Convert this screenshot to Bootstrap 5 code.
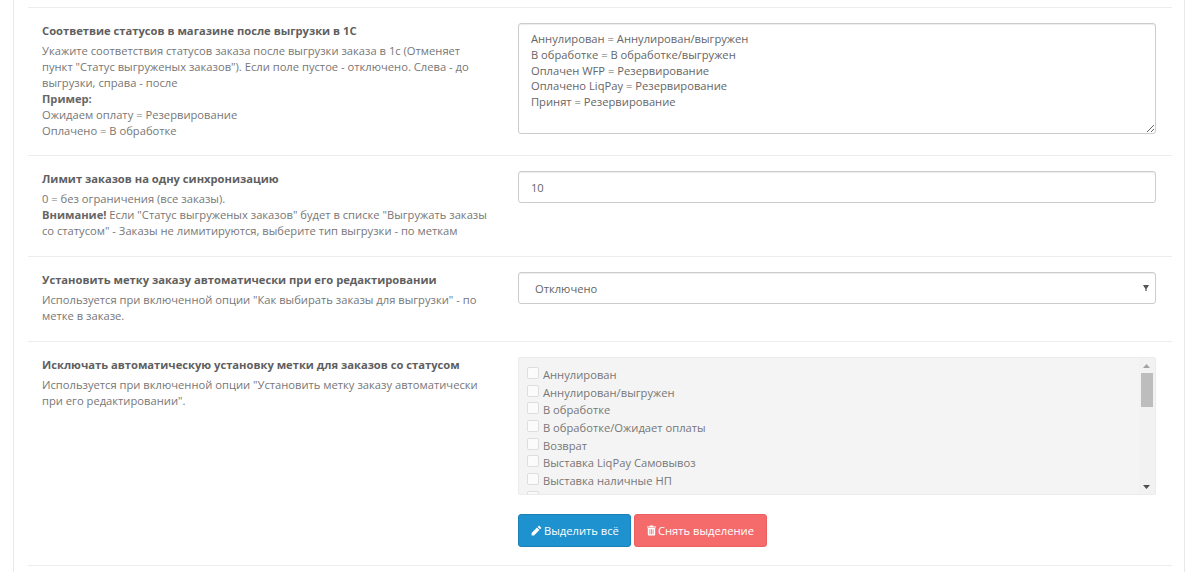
<!DOCTYPE html>
<html lang="ru">
<head>
<meta charset="utf-8">
<title>Настройки</title>
<link href="https://cdn.jsdelivr.net/npm/bootstrap@5.3.0/dist/css/bootstrap.min.css" rel="stylesheet">
<style>
html, body { height: 100%; overflow: hidden; }
body { background: #fff; font-family: "Open Sans", "Liberation Sans", sans-serif; font-size: 11.2px; color: #666; line-height: 16px; padding: 0 15px 0 13px; }
.sheet { min-height: 100%; border-left: 1px solid #e8e8e8; border-right: 1px solid #e8e8e8; padding: 7px 12px 0 14px; }
.fld { margin: 0; border-top: 1px solid #ededed; padding: 15px 0 17px; }
.fld-first { padding-bottom: 16px; }
.fld-last { padding-bottom: 18px; }
.fld-left { padding: 0 14px 0 14px; }
.fld-right { padding: 0 16px 0 13.3px; }
.fld-title { font-weight: 700; color: #5f5f5f; margin-bottom: 4px; }
.fld-help { color: #777; }
.fld-help b { color: #666; }
.ctl { font-size: 11.2px; line-height: 15.8px; color: #666; border: 1px solid #ccc; border-radius: 3px; box-shadow: inset 0 1px 1px rgba(0,0,0,.075); font-family: inherit; }
.ctl-area { height: 111px; padding: 7px 12px; }
.ctl-line { height: 32px; padding: 7px 12px; }
.ctl-sel { height: 32px; padding: 8px 12px 6px; text-indent: 4px; background-image: url("data:image/svg+xml,%3Csvg xmlns='http://www.w3.org/2000/svg' viewBox='0 0 6 6'%3E%3Cpath fill='%23555' d='M0 0h6L3.6 4v2H2.4V4z'/%3E%3C/svg%3E"); background-position: right 6px center; background-size: 6px 6px; }
.chk-box { height: 138px; margin-bottom: 19px; background: #f4f4f4; border: 1px solid #ebebeb; border-radius: 2px; display: flex; color: #777; }
.chk-list { flex: 1 1 auto; min-width: 0; overflow: hidden; padding: 7px 0 0 8px; }
.chk-item { display: flex; align-items: flex-start; height: 17.7px; margin: 0; }
.chk-mark { flex: none; width: 12px; height: 12px; margin: 2px 4px 0 0; background: #fbfbfb; border: 1px solid #dedede; border-radius: 2px; appearance: none; }
.chk-text { padding-top: 2px; }
.scr-bar { flex: none; width: 16px; background: #f2f2f2; display: flex; flex-direction: column; align-items: flex-start; }
.scr-btn { flex: none; width: 15px; height: 15px; display: flex; align-items: center; justify-content: center; }
.scr-thumb { flex: none; width: 12px; height: 34px; margin-left: 2px; background: #bdbdbd; }
.scr-fill { flex: 1 1 auto; }
.act-row { gap: 3px; }
.act-btn { height: 33px; padding: 0 12px; font-size: 11.2px; line-height: 31px; color: #fff; border-radius: 3px; display: inline-flex; align-items: center; gap: 2px; white-space: nowrap; }
.act-blue { background: #1e91cf; border-color: #1b80b8; width: 113px; }
.act-red { background: #f56b6b; border-color: #ee5f5f; width: 133px; }
.act-btn svg { flex: none; fill: #fff; }
</style>
</head>
<body>
<div class="sheet">
  <div class="row fld fld-first">
    <div class="col-5 fld-left">
      <div class="fld-title">Соответвие статусов в магазине после выгрузки в 1С</div>
      <div class="fld-help">Укажите соответствия статусов заказа после выгрузки заказа в 1с (Отменяет пункт "Статус выгруженых заказов"). Если поле пустое - отключено. Слева - до выгрузки, справа - после<br><b>Пример:</b><br>Ожидаем оплату = Резервирование<br>Оплачено = В обработке</div>
    </div>
    <div class="col-7 fld-right">
      <textarea class="form-control ctl ctl-area">Аннулирован = Аннулирован/выгружен
В обработке = В обработке/выгружен
Оплачен WFP = Резервирование
Оплачено LiqPay = Резервирование
Принят = Резервирование</textarea>
    </div>
  </div>
  <div class="row fld">
    <div class="col-5 fld-left">
      <div class="fld-title">Лимит заказов на одну синхронизацию</div>
      <div class="fld-help">0 = без ограничения (все заказы).<br><b>Внимание!</b> Если "Статус выгруженых заказов" будет в списке "Выгружать заказы со статусом" - Заказы не лимитируются, выберите тип выгрузки - по меткам</div>
    </div>
    <div class="col-7 fld-right">
      <input type="text" class="form-control ctl ctl-line" value="10">
    </div>
  </div>
  <div class="row fld">
    <div class="col-5 fld-left">
      <div class="fld-title">Установить метку заказу автоматически при его редактировании</div>
      <div class="fld-help">Используется при включенной опции "Как выбирать заказы для выгрузки" - по метке в заказе.</div>
    </div>
    <div class="col-7 fld-right">
      <select class="form-select ctl ctl-sel"><option>Отключено</option></select>
    </div>
  </div>
  <div class="row fld fld-last">
    <div class="col-5 fld-left">
      <div class="fld-title">Исключать автоматическую установку метки для заказов со статусом</div>
      <div class="fld-help">Используется при включенной опции "Установить метку заказу автоматически при его редактировании".</div>
    </div>
    <div class="col-7 fld-right">
      <div class="chk-box">
        <div class="chk-list">
          <label class="chk-item"><input type="checkbox" class="chk-mark"><span class="chk-text">Аннулирован</span></label>
          <label class="chk-item"><input type="checkbox" class="chk-mark"><span class="chk-text">Аннулирован/выгружен</span></label>
          <label class="chk-item"><input type="checkbox" class="chk-mark"><span class="chk-text">В обработке</span></label>
          <label class="chk-item"><input type="checkbox" class="chk-mark"><span class="chk-text">В обработке/Ожидает оплаты</span></label>
          <label class="chk-item"><input type="checkbox" class="chk-mark"><span class="chk-text">Возврат</span></label>
          <label class="chk-item"><input type="checkbox" class="chk-mark"><span class="chk-text">Выставка LiqPay Самовывоз</span></label>
          <label class="chk-item"><input type="checkbox" class="chk-mark"><span class="chk-text">Выставка наличные НП</span></label>
          <label class="chk-item"><input type="checkbox" class="chk-mark"></label>
        </div>
        <div class="scr-bar">
          <div class="scr-btn"><svg width="7" height="4" viewBox="0 0 7 4"><path fill="#a3a3a3" d="M3.5 0L7 4H0z"/></svg></div>
          <div class="scr-thumb"></div>
          <div class="scr-fill"></div>
          <div class="scr-btn"><svg width="7" height="4" viewBox="0 0 7 4"><path fill="#505050" d="M0 0h7L3.500 4z"/></svg></div>
        </div>
      </div>
      <div class="d-flex act-row">
        <button type="button" class="btn act-btn act-blue"><svg width="11" height="11" viewBox="0 0 11 11"><path d="M8 .6l2.400 2.400-1.300 1.300-2.400-2.400zM6 2.600L8.400 5 3 10.400H.6V8z"/></svg>Выделить всё</button>
        <button type="button" class="btn act-btn act-red"><svg width="9" height="11" viewBox="0 0 9 11"><path fill-rule="evenodd" d="M3 .5h3l.6 1H9v1H0v-1h2.400zM.8 3h7.400v6.500a1 1 0 0 1-1 1H1.800a1 1 0 0 1-1-1zM2.500 4.300v5h.8v-5zM4.100 4.300v5h.8v-5zM5.700 4.300v5h.8v-5z"/></svg>Снять выделение</button>
      </div>
    </div>
  </div>
  <div class="row fld"></div>
</div>
</body>
</html>
